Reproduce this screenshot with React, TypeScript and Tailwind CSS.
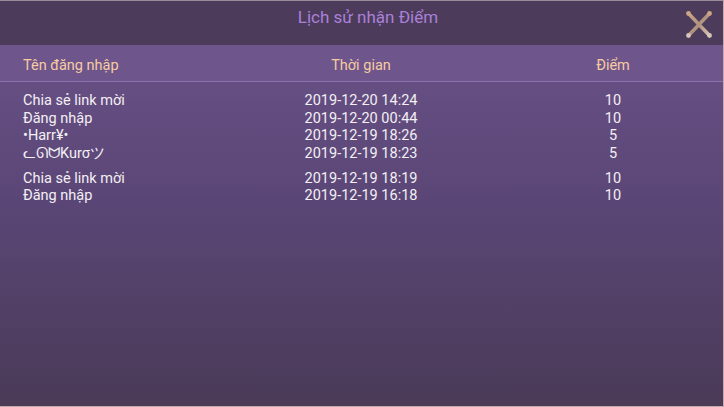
const rows = [
  { name: "Chia sẻ link mời", time: "2019-12-20 14:24", points: 10 },
  { name: "Đăng nhập", time: "2019-12-20 00:44", points: 10 },
  { name: "•Harr¥•", time: "2019-12-19 18:26", points: 5 },
  { name: "ᓚᘏᗢKurσツ", time: "2019-12-19 18:23", points: 5, tall: true },
  { name: "Chia sẻ link mời", time: "2019-12-19 18:19", points: 10 },
  { name: "Đăng nhập", time: "2019-12-19 16:18", points: 10 },
];

function CloseIcon() {
  return (
    <svg width="28" height="29" viewBox="0 0 28 29">
      <defs>
        <linearGradient id="bone" x1="0" y1="0" x2="1" y2="1">
          <stop offset="0" stopColor="#c9a386" />
          <stop offset="0.5" stopColor="#b0927e" />
          <stop offset="1" stopColor="#d4c0b0" />
        </linearGradient>
      </defs>
      <line x1="4" y1="4" x2="24" y2="25" stroke="url(#bone)" strokeWidth="3.5" strokeLinecap="round" />
      <line x1="24" y1="4" x2="4" y2="25" stroke="url(#bone)" strokeWidth="3.5" strokeLinecap="round" />
      <circle cx="3.5" cy="3.5" r="2.4" fill="#cda686" />
      <circle cx="24.5" cy="3.5" r="2.4" fill="#cda686" />
      <circle cx="3.5" cy="25.5" r="2.4" fill="#d8c6b8" />
      <circle cx="24.5" cy="25.5" r="2.4" fill="#d8c6b8" />
    </svg>
  );
}

export default function App() {
  return (
    <div
      className="w-[724px] h-[407px] flex flex-col overflow-hidden border-t border-t-[#9c8c98] border-r border-r-[#c8a8a8] border-b border-b-[#c8a8a8] bg-gradient-to-b from-[#6d548b] via-[#5a4676] to-[#4a3a57]"
      style={{ fontFamily: "Roboto, 'Noto Sans', sans-serif" }}
    >
      <header className="relative h-[44px] shrink-0 bg-[#4d3b5c] flex items-center justify-center">
        <h1 className="text-[17px] text-[#a981d9] -mt-[10px] ml-[13px]">Lịch sử nhận Điểm</h1>
        <button className="absolute right-[10px] top-[9px]">
          <CloseIcon />
        </button>
      </header>

      <div className="h-[37px] shrink-0 bg-[#6e568c] border-b border-[#8d73ab] flex items-center pt-[6px] text-[14.5px] text-[#f7cba2]">
        <div className="w-[273px] pl-[23px]">Tên đăng nhập</div>
        <div className="w-[176px] text-center">Thời gian</div>
        <div className="w-[100px]" />
        <div className="w-[128px] text-center">Điểm</div>
      </div>

      <div className="pt-[10px] text-[14.5px] text-[#f3eff3]">
        {rows.map((r, i) => (
          <div key={i} className={`flex items-center h-[17.7px] leading-[18px] ${r.tall ? "mb-[7px]" : ""}`}>
            <div className="w-[273px] pl-[23px]">{r.name}</div>
            <div className="w-[176px] text-center">{r.time}</div>
            <div className="w-[100px]" />
            <div className="w-[128px] text-center">{r.points}</div>
          </div>
        ))}
      </div>
    </div>
  );
}
